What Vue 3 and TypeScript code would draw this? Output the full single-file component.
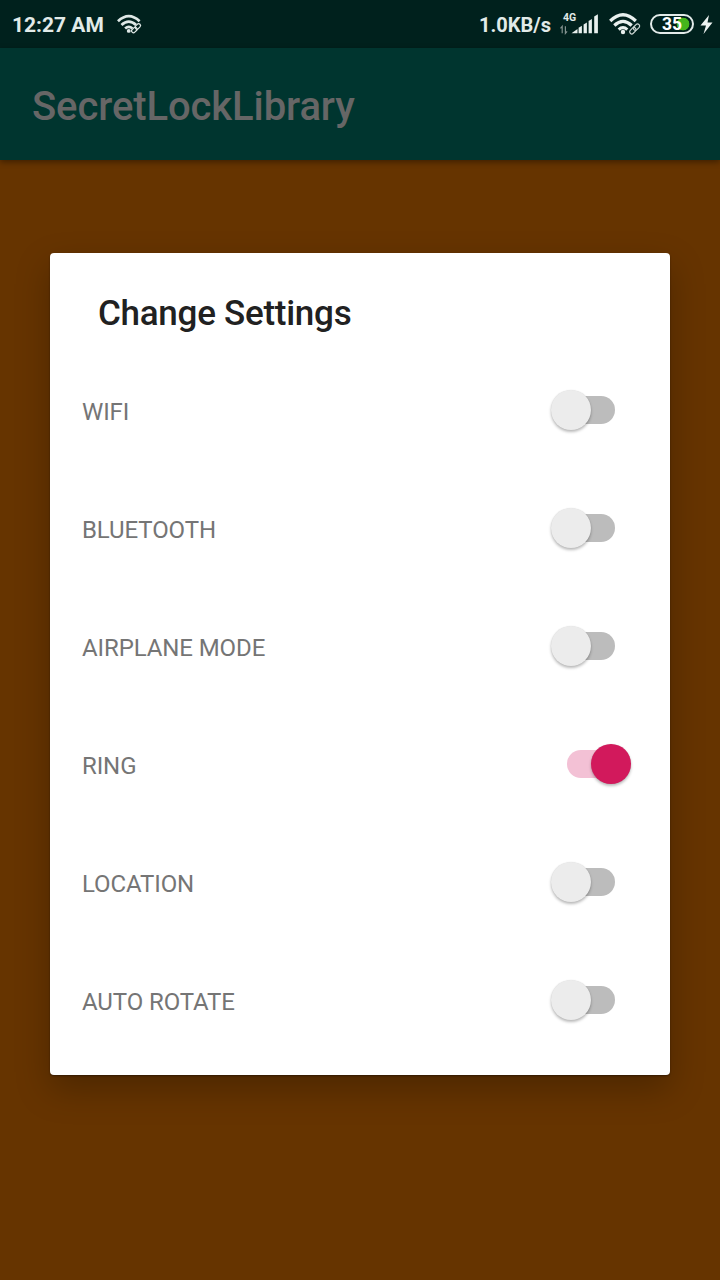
<script setup lang="ts">
import { ref } from 'vue'

interface Setting {
  label: string
  on: boolean
}

const settings = ref<Setting[]>([
  { label: 'WIFI', on: false },
  { label: 'BLUETOOTH', on: false },
  { label: 'AIRPLANE MODE', on: false },
  { label: 'RING', on: true },
  { label: 'LOCATION', on: false },
  { label: 'AUTO ROTATE', on: false },
])
</script>

<template>
  <div class="screen">
    <header class="status">
      <span class="time">12:27 AM</span>
      <svg class="wifi-small" width="26" height="20" viewBox="0 0 32 24">
        <g fill="none" stroke="#dfe9e7" stroke-width="3.4">
          <path d="M1.200 8.500Q14.500 -4 27.800 8.500" />
          <path d="M5.500 13.200Q14.500 5 23.500 13.200" />
          <path d="M10 17.500Q14.500 13.600 19 17.500" />
        </g>
        <circle cx="14.500" cy="20.500" r="2.400" fill="#dfe9e7" />
        <path d="M19 22L28 13" fill="none" stroke="#00211d" stroke-width="6" />
        <g fill="none" stroke="#dfe9e7" stroke-width="1.500">
          <rect x="-4" y="-2.300" width="7.500" height="4.600" rx="2.300" transform="translate(21.500 19.200) rotate(-45)" />
          <rect x="-4" y="-2.300" width="7.500" height="4.600" rx="2.300" transform="translate(25.800 14.800) rotate(-45)" />
        </g>
      </svg>
      <span class="rate">1.0KB/s</span>
      <span class="signal">
        <span class="network">4G</span>
        <svg width="40" height="24" viewBox="0 0 40 24">
          <g fill="none" stroke="#82928f" stroke-width="1.200">
            <path d="M3.200 21.300V14.300L1.500 16.300M6.400 14.300V21.300L8.100 19.300" />
          </g>
          <g fill="#e8f0ee">
            <path d="M12.500 21.300L18.500 17V21.300Z" />
            <path d="M19.600 15.700L22.900 13.700V21.300H19.600Z" />
            <path d="M24.600 12.400L27.900 10.400V21.300H24.600Z" />
            <path d="M29.600 9L32.900 7V21.300H29.600Z" />
            <path d="M35.200 4.500L38.900 2.200V21.300H35.200Z" />
          </g>
        </svg>
      </span>
      <svg class="wifi" width="32" height="24" viewBox="0 0 32 24">
        <g fill="none" stroke="#e8f0ee" stroke-width="3.200">
          <path d="M1.200 9Q14 -3.600 26.800 9" />
          <path d="M5.300 13.500Q14 5.300 22.700 13.500" />
          <path d="M9.700 17.600Q14 13.800 18.300 17.600" />
        </g>
        <circle cx="14" cy="20" r="2.200" fill="#e8f0ee" />
        <path d="M20 21.500L28 13.500" stroke="#00211d" stroke-width="5" />
        <g fill="none" stroke="#cbd6d3" stroke-width="1.200">
          <rect x="-3.800" y="-2.100" width="7.200" height="4.200" rx="2.100" transform="translate(24 18.600) rotate(-45)" />
          <rect x="-3.800" y="-2.100" width="7.200" height="4.200" rx="2.100" transform="translate(27.600 15) rotate(-45)" />
        </g>
      </svg>
      <span class="battery"><span class="percent">35</span></span>
      <svg class="bolt" width="14" height="20" viewBox="0 0 14 20">
        <path d="M9 1L.5 11.500H6L3.500 20L12.500 8.500H7.500Z" fill="#edf4f2" />
      </svg>
    </header>

    <div class="toolbar"><span>SecretLockLibrary</span></div>

    <main>
      <section class="dialog">
        <h1>Change Settings</h1>
        <div v-for="item in settings" :key="item.label" class="row">
          <span class="label">{{ item.label }}</span>
          <button
            class="switch"
            :class="{ on: item.on }"
            role="switch"
            :aria-checked="item.on"
            :aria-label="item.label"
            @click="item.on = !item.on"
          >
            <i class="thumb"></i>
          </button>
        </div>
      </section>
    </main>
  </div>
</template>

<style>
body {
  margin: 0;
}
</style>

<style scoped>
.screen {
  width: 720px;
  height: 1280px;
  overflow: hidden;
  display: flex;
  flex-direction: column;
  background: #663400;
  font-family: Roboto, sans-serif;
}
.status {
  height: 48px;
  flex: none;
  display: flex;
  align-items: center;
  background: #00211d;
  color: #e2ebe9;
}
.time {
  margin-left: 12px;
  width: 105px;
  font-size: 21px;
  font-weight: 700;
  line-height: 48px;
  padding-top: 1px;
  white-space: nowrap;
}
.rate {
  margin-left: auto;
  width: 80px;
  font-size: 20px;
  font-weight: 700;
  line-height: 48px;
  padding-top: 1px;
}
.signal {
  position: relative;
  width: 40px;
  height: 24px;
  margin-right: 10px;
}
.signal svg,
.wifi,
.bolt {
  display: block;
}
.network {
  position: absolute;
  left: 4px;
  top: 0;
  font-size: 10.5px;
  line-height: 11px;
  font-weight: 700;
}
.battery {
  box-sizing: border-box;
  width: 44px;
  height: 20px;
  margin-left: 9px;
  border: 2px solid #e2ebe9;
  border-radius: 10px;
  display: flex;
  align-items: center;
  justify-content: center;
  background: radial-gradient(circle at 31px 8px, #45b51c 6px, transparent 6.7px);
}
.percent {
  font-size: 17.5px;
  line-height: 18px;
  font-weight: 700;
  color: #fff;
}
.bolt {
  margin: 0 6px 0 6px;
}
.toolbar {
  position: relative;
  height: 112px;
  flex: none;
  display: flex;
  align-items: center;
  box-sizing: border-box;
  padding-left: 32px;
  background: #00352f;
  color: #666;
  font-size: 40px;
  font-weight: 500;
  letter-spacing: -0.1px;
  box-shadow: 0 2px 6px rgba(0, 0, 0, 0.4);
}
.toolbar span {
  padding-top: 4px;
}
main {
  padding: 93px 50px 0;
}
.dialog {
  box-sizing: border-box;
  height: 822px;
  background: #fff;
  border-radius: 4px;
  box-shadow: 0 14px 34px rgba(0, 0, 0, 0.25), 0 1px 2px rgba(0, 0, 0, 0.4);
}
h1 {
  box-sizing: border-box;
  height: 98px;
  margin: 0;
  padding: 38px 48px 0;
  font-size: 35px;
  line-height: 46px;
  font-weight: 500;
  letter-spacing: -0.27px;
  color: #212121;
}
.row {
  height: 118px;
  display: flex;
  align-items: center;
  justify-content: space-between;
  padding: 0 55px 0 32px;
}
.label {
  padding-top: 4px;
  font-size: 24px;
  letter-spacing: -0.1px;
  color: #757575;
}
.switch {
  position: relative;
  width: 48px;
  height: 28px;
  padding: 0;
  border: 0;
  border-radius: 14px;
  background: #bcbcbc;
}
.thumb {
  position: absolute;
  left: -16px;
  top: -6px;
  width: 40px;
  height: 40px;
  border-radius: 50%;
  background: #ececec;
  box-shadow: 0 2px 3px rgba(0, 0, 0, 0.27), 0 0 1px rgba(0, 0, 0, 0.12);
}
.on {
  background: #f3c1d5;
}
.on .thumb {
  left: 24px;
  background: #d2195c;
}
</style>
